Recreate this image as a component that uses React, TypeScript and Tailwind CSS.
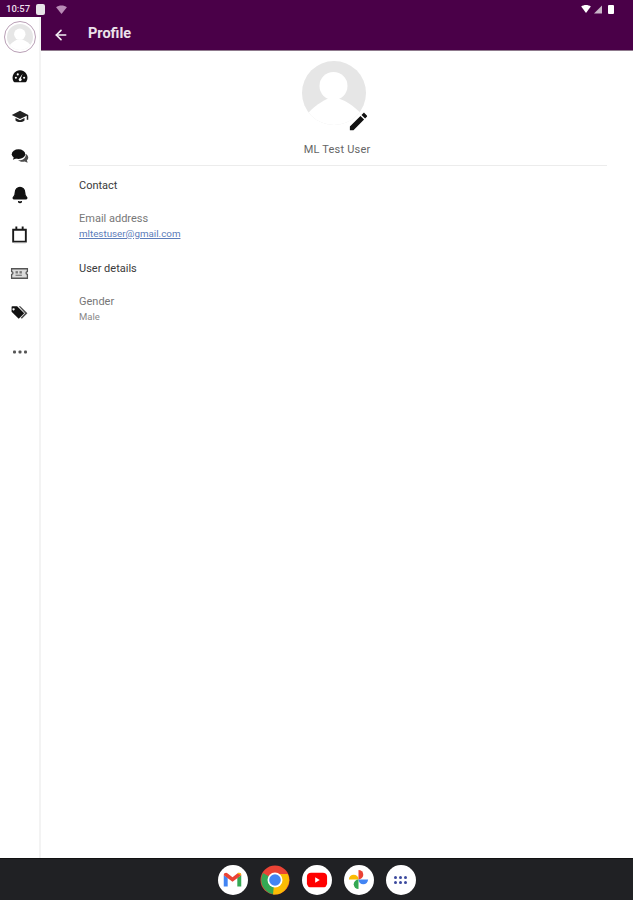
import React from 'react';
import { ArrowLeft, Bell } from 'lucide-react';

const AvatarArt: React.FC<{ className?: string; clip: string }> = ({ className, clip }) => (
  <svg viewBox="0 0 64 64" className={className}>
    <defs>
      <clipPath id={clip}>
        <circle cx="32" cy="32" r="32" />
      </clipPath>
    </defs>
    <g clipPath={`url(#${clip})`}>
      <rect width="64" height="64" fill="#e6e6e6" />
      <circle cx="31.500" cy="25" r="14" fill="#fff" />
      <path d="M0 64V60C8 48 17 42 25 38h13c8 3 17 9 26 20v6z" fill="#fff" />
    </g>
  </svg>
);

const DashIcon = () => (
  <svg viewBox="0 0 24 24" className="w-[18px] h-[18px]" fill="#111">
    <path d="M12 3a10 10 0 0 0-8.600 15c.3.500.8 1 1.400 1h14.400c.6 0 1.100-.5 1.400-1A10 10 0 0 0 12 3z" />
    <circle cx="6.500" cy="13" r="1.400" fill="#fff" />
    <circle cx="9" cy="8.500" r="1.400" fill="#fff" />
    <circle cx="17.500" cy="13" r="1.400" fill="#fff" />
    <path d="M15.500 7.500l-2.300 6.200a2 2 0 1 1-2 .1z" fill="#fff" />
  </svg>
);

const CapIcon = () => (
  <svg viewBox="0 0 24 24" className="w-[18px] h-[18px]" fill="#222">
    <path d="M12 5 1 10.500 12 16l9-4.500V17h2v-6.500z" />
    <path d="M6 14.500V18c1.500 1.500 3.800 2 6 2s4.500-.5 6-2v-3.500l-6 3z" />
  </svg>
);

const ChatIcon = () => (
  <svg viewBox="0 0 24 24" className="w-[18px] h-[18px]" fill="#111">
    <ellipse cx="10" cy="9.500" rx="9" ry="6.500" />
    <path d="M4 13l-1.500 4 5-2z" />
    <path d="M20.500 9.500c1.500 1.200 2.500 2.800 2.500 4.500 0 1.500-.7 2.800-1.800 3.800l1 3.200-4-1.700c-1 .3-2 .4-3 .4-2.300 0-4.400-.8-5.800-2 6 .3 11-3 10.100-8.200z" opacity="0.75" />
  </svg>
);

const CalIcon = () => (
  <svg viewBox="0 0 24 24" className="w-[19px] h-[19px]" fill="none" stroke="#1a1a1a" strokeWidth="2.400">
    <path d="M4 6h16v15H4z" />
    <path d="M8 2v4M16 2v4" />
    <path d="M5 22.500h15" stroke="#aaa" strokeWidth="1" />
  </svg>
);

const TicketIcon = () => (
  <svg viewBox="0 0 24 24" className="w-[19px] h-[19px]" fill="none" stroke="#555" strokeWidth="1.600">
    <path d="M2 6h20v3.500a1 1 0 0 0 0 3.500v5H2v-5a1 1 0 0 0 0-3.500z" fill="#dcdcdc" />
    <rect x="7" y="9" width="3" height="3" fill="#777" stroke="none" />
    <rect x="12" y="9" width="3" height="3" fill="#777" stroke="none" />
    <rect x="7" y="13.500" width="8" height="1.500" fill="#777" stroke="none" />
  </svg>
);

const TagsIcon = () => (
  <svg viewBox="0 0 24 24" className="w-[19px] h-[19px]" fill="#111">
    <path d="M2 5v6l9 9 7-7-9-9H3a1 1 0 0 0-1 1zm4 3a1.500 1.500 0 1 1 0-.01z" />
    <path d="M13 4l9 9-7 7-1.500-1.500 5.500-5.500-8-9z" opacity="0.75" />
  </svg>
);

const DotsIcon = () => (
  <svg viewBox="0 0 18 18" className="w-[18px] h-[18px]" fill="#555">
    <rect x="2" y="7.500" width="3" height="3" rx="1" />
    <rect x="7.500" y="7.500" width="3" height="3" rx="1" />
    <rect x="13" y="7.500" width="3" height="3" rx="1" />
  </svg>
);

const GmailIcon = () => (
  <svg viewBox="0 0 24 24" className="w-[21px] h-[21px]">
    <path d="M2 7v13h4.500V10z" fill="#4285f4" />
    <path d="M17.500 10v10H22V7z" fill="#34a853" />
    <path d="M2 7c0-2.300 2.600-3.400 4.500-2L12 9.500 17.500 5c1.900-1.400 4.500-.3 4.500 2l-10 7.500z" fill="#ea4335" />
    <path d="M17.500 5 22 7c0-2.300-2.600-3.400-4.500-2z" fill="#fbbc04" />
  </svg>
);

const ChromeIcon = () => (
  <svg viewBox="0 0 30 30" className="w-[30px] h-[30px]">
    <circle cx="15" cy="15" r="14.500" fill="#ea4335" />
    <path d="M15 15 3 8A14.500 14.500 0 0 0 15 29.500z" fill="#34a853" />
    <path d="M15 9h12.800A14.500 14.500 0 0 1 13 29.400z" fill="#fbbc04" />
    <circle cx="15" cy="15" r="7.500" fill="#fff" />
    <circle cx="15" cy="15" r="5.800" fill="#4285f4" />
  </svg>
);

const YoutubeIcon = () => (
  <svg viewBox="0 0 24 24" className="w-[22px] h-[22px]">
    <rect x="1" y="4" width="22" height="16" rx="4.500" fill="#f00" />
    <path d="M10 9v6l5-3z" fill="#fff" />
  </svg>
);

const PhotosIcon = () => (
  <svg viewBox="0 0 24 24" className="w-[23px] h-[23px]">
    <path d="M12 12H2a5 5 0 0 1 10 0z" fill="#fbbc04" />
    <path d="M12 12V2a5 5 0 0 1 0 10z" fill="#ea4335" />
    <path d="M12 12h10a5 5 0 0 1-10 0z" fill="#4285f4" />
    <path d="M12 12v10a5 5 0 0 1 0-10z" fill="#34a853" />
  </svg>
);

const DockIcon: React.FC<{ children: React.ReactNode; bare?: boolean }> = ({ children, bare }) => (
  <div className={`w-[30px] h-[30px] rounded-full flex items-center justify-center ${bare ? '' : 'bg-white'}`}>
    {children}
  </div>
);

const railIcon = 'h-[18px] flex items-center';

export default function App() {
  return (
    <div className="w-[633px] h-[900px] flex flex-col bg-white overflow-hidden font-['Roboto',sans-serif]">
      {/* Status bar */}
      <div className="h-[17px] bg-[#4a0048] flex items-center justify-between pl-[6px] pr-[19px] pt-[1px] text-white shrink-0">
        <div className="flex items-center gap-[6px]">
          <span className="text-[9.500px] font-medium text-[#ecdfeb] leading-none">10:57</span>
          <div className="w-[9px] h-[11px] bg-[#e8e4e8] rounded-[2px]" />
          <svg viewBox="0 0 12 10" className="w-[11px] h-[9px] ml-[5px]" fill="#b98bb6">
            <path d="M0 2.500C3 0 9 0 12 2.500L6 10z" />
          </svg>
        </div>
        <div className="flex items-center gap-[3px]">
          <svg viewBox="0 0 12 10" className="w-[10px] h-[8px]" fill="#fff">
            <path d="M0 2C3-.5 9-.5 12 2L6 10z" />
          </svg>
          <svg viewBox="0 0 10 10" className="w-[8px] h-[9px]" fill="#c9b6c8">
            <path d="M10 0v10H0z" />
          </svg>
          <div className="w-[6px] h-[9px] bg-white rounded-[1px] ml-[3px]" />
        </div>
      </div>

      <div className="flex flex-1 min-h-0">
        {/* Side rail */}
        <div className="w-[41px] shrink-0 border-r-2 border-[#f3f3f3] flex flex-col items-center">
          <div className="w-[32px] h-[32px] mt-[4px] rounded-full border border-[#b9a0b6] flex items-center justify-center">
            <AvatarArt clip="rail-clip" className="w-[26px] h-[26px]" />
          </div>
          <div className="mt-[15px] flex flex-col items-center gap-[21.300px]">
            <div className={railIcon}><DashIcon /></div>
            <div className={railIcon}><CapIcon /></div>
            <div className={railIcon}><ChatIcon /></div>
            <div className={railIcon}><Bell className="w-[18px] h-[18px] text-[#111]" fill="#111" /></div>
            <div className={railIcon}><CalIcon /></div>
            <div className={railIcon}><TicketIcon /></div>
            <div className={railIcon}><TagsIcon /></div>
            <div className={railIcon}><DotsIcon /></div>
          </div>
        </div>

        <div className="flex-1 flex flex-col min-w-0">
          {/* Header */}
          <div className="h-[34px] bg-[#4a0048] border-b border-[#8f7a8d] flex items-center pl-[12px] pt-[2px] shrink-0">
            <ArrowLeft className="w-[16px] h-[16px] text-[#f4eef4]" strokeWidth={2.500} />
            <span className="ml-[19px] text-[14.500px] font-bold text-[#ece2eb] leading-none">Profile</span>
          </div>

          {/* Profile */}
          <div className="flex flex-col items-center pt-[10px]">
            <div className="relative w-[64px] h-[64px] mr-[6px]">
              <AvatarArt clip="main-clip" className="w-[64px] h-[64px]" />
              <svg viewBox="0 0 24 24" className="absolute right-[-4px] bottom-[-8px] w-[23px] h-[23px]" fill="#111">
                <path d="M3 17.250V21h3.750L17.810 9.940l-3.750-3.750L3 17.250zM20.710 7.040c.39-.39.39-1.020 0-1.410l-2.340-2.340c-.39-.39-1.020-.39-1.410 0l-1.830 1.830 3.750 3.750 1.830-1.830z" />
              </svg>
            </div>
            <span className="mt-[18px] text-[11px] leading-[14px] text-[#666] tracking-[0.2px]">ML Test User</span>
          </div>
          <div className="mt-[8px] ml-[28px] mr-[26px] border-t border-[#ececec]" />

          <div className="pl-[38px] flex flex-col">
            <span className="mt-[13px] text-[11px] leading-[14px] text-[#3a3a3a]">Contact</span>
            <span className="mt-[19px] text-[11px] leading-[14px] text-[#777]">Email address</span>
            <a className="mt-[1px] text-[9.800px] leading-[14px] text-[#5c7dba] underline">mltestuser@gmail.com</a>
            <span className="mt-[21px] text-[11px] leading-[14px] text-[#3a3a3a]">User details</span>
            <span className="mt-[19px] text-[11px] leading-[14px] text-[#777]">Gender</span>
            <span className="mt-[1px] text-[9.500px] leading-[14px] text-[#888]">Male</span>
          </div>
        </div>
      </div>

      {/* Dock */}
      <div className="h-[42px] bg-[#202124] border-t border-[#111] flex items-center justify-center gap-[12px] shrink-0">
        <DockIcon><GmailIcon /></DockIcon>
        <DockIcon bare><ChromeIcon /></DockIcon>
        <DockIcon><YoutubeIcon /></DockIcon>
        <DockIcon><PhotosIcon /></DockIcon>
        <DockIcon>
          <div className="grid grid-cols-3 gap-[2px]">
            {[0, 1, 2, 3, 4, 5].map(i => (
              <div key={i} className="w-[3px] h-[3px] rounded-full bg-[#3c4a9e]" />
            ))}
          </div>
        </DockIcon>
      </div>
    </div>
  );
}
